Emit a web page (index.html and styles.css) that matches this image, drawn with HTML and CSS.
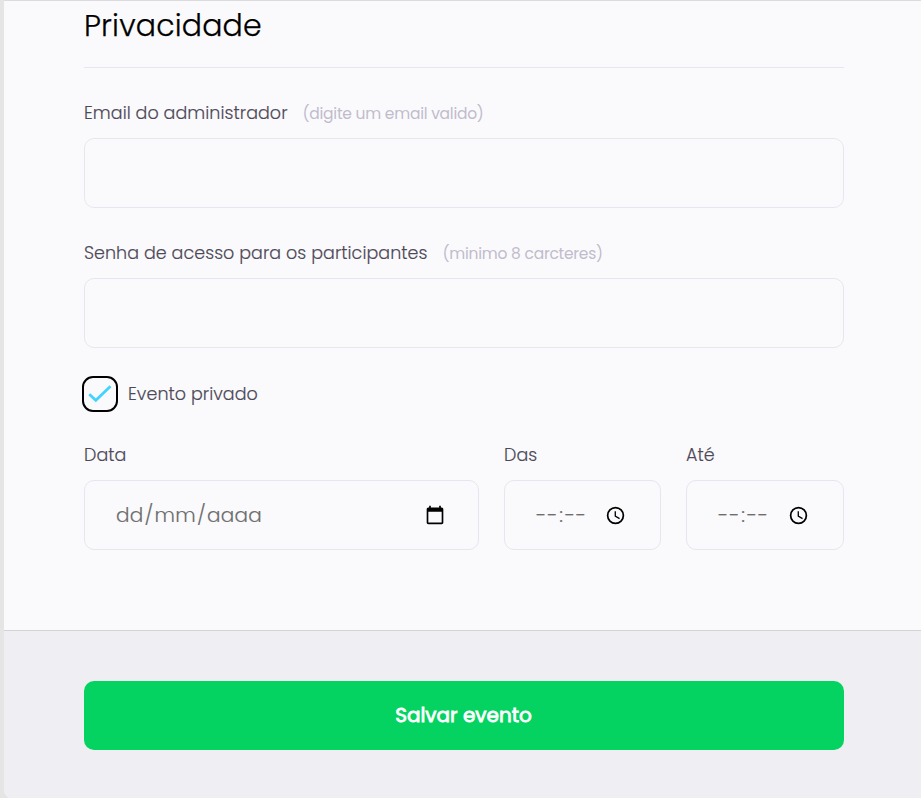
FILE: index.html
```html
<!DOCTYPE html>
<html lang="pt-BR">
<head>
<meta charset="utf-8">
<title>Privacidade</title>
<link rel="stylesheet" href="styles.css">
</head>
<body>
<form class="card">
  <section class="content">
    <h1>Privacidade</h1>
    <div class="field">
      <label for="email">Email do administrador<small>(digite um email valido)</small></label>
      <input id="email" type="email">
    </div>
    <div class="field">
      <label for="senha">Senha de acesso para os participantes<small>(minimo 8 carcteres)</small></label>
      <input id="senha" type="password">
    </div>
    <div class="check">
      <span class="box"><svg width="24" height="20" viewBox="0 0 24 20"><path d="M1.300 10.200 7.800 16.300 22.500 2.200" fill="none" stroke="#42d3ff" stroke-width="2.7"/></svg></span>
      <span>Evento privado</span>
    </div>
    <div class="row">
      <div class="field date">
        <label>Data</label>
        <div class="control"><span class="value"><span>dd</span>/<span>mm</span>/<span>aaaa</span></span>
          <svg width="20" height="20" viewBox="0 0 24 24"><path d="M20 3h-1V1h-2v2H7V1H5v2H4c-1.100 0-2 .9-2 2v16c0 1.100.9 2 2 2h16c1.100 0 2-.9 2-2V5c0-1.100-.9-2-2-2zm0 18H4V8h16v13z"/></svg>
        </div>
      </div>
      <div class="field time">
        <label>Das</label>
        <div class="control"><span class="value"><span>--</span>:<span>--</span></span>
          <svg width="21" height="21" viewBox="0 0 24 24"><path d="M12 2a10 10 0 1 0 0 20 10 10 0 0 0 0-20zm0 18a8 8 0 1 1 0-16 8 8 0 0 1 0 16zm.5-13H11v6l5.250 3.150.75-1.230-4.500-2.670z"/></svg>
        </div>
      </div>
      <div class="field time">
        <label>Até</label>
        <div class="control"><span class="value"><span>--</span>:<span>--</span></span>
          <svg width="21" height="21" viewBox="0 0 24 24"><path d="M12 2a10 10 0 1 0 0 20 10 10 0 0 0 0-20zm0 18a8 8 0 1 1 0-16 8 8 0 0 1 0 16zm.5-13H11v6l5.250 3.150.75-1.230-4.500-2.670z"/></svg>
        </div>
      </div>
    </div>
  </section>
  <footer><button type="button">Salvar evento</button></footer>
</form>
</body>
</html>
```
FILE: styles.css
```css
* { box-sizing: border-box; margin: 0; padding: 0; }
html { background: #e5e5e5; overflow: hidden; }
body {
  height: 798px;
  overflow: hidden;
  padding-left: 4px;
  font-family: Poppins, Inter, sans-serif;
  font-weight: 300;
  color: #4e4958;
}
.card {
  height: 799px;
  border-top: 1px solid #dcdcde;
  border-radius: 0 0 0 10px;
  background: #fafafc;
  overflow: hidden;
}
.content { height: 629px; padding: 0 77px 0 80px; }
h1 {
  height: 67px;
  padding-top: 1px;
  border-bottom: 1px solid #e6e6f0;
  font-size: 30px;
  line-height: 48px;
  font-weight: 300;
  letter-spacing: 0.17px;
  -webkit-text-stroke: 0.25px #000;
  color: #000;
}
.field { display: flex; flex-direction: column; }
.content > .field { height: 140px; padding-top: 33px; }
label, .check {
  font-size: 17.5px;
  letter-spacing: 0.05px;
  white-space: nowrap;
  -webkit-text-stroke: 0.15px #4e4958;
}
label { display: flex; align-items: center; height: 24px; margin-bottom: 13px; }
label small {
  margin-left: 15px;
  padding-top: 1px;
  font-size: 15.5px;
  font-weight: 400;
  letter-spacing: -0.25px;
  -webkit-text-stroke: 0;
  color: #c1bccc;
}
input, .control {
  width: 100%;
  height: 70px;
  border: 1px solid #e6e6f0;
  border-radius: 10px;
  background: #fafafc;
}
.check { display: flex; align-items: center; height: 36px; margin: 28px 0 0 -2px; }
.box {
  display: flex;
  align-items: center;
  justify-content: center;
  width: 36px;
  height: 36px;
  margin-right: 10px;
  border: 2px solid #000;
  border-radius: 11px;
}
.row { display: grid; grid-template-columns: 395px 157px 158px; gap: 25px; margin-top: 31px; }
.control { display: flex; align-items: center; justify-content: space-between; padding: 0 33px 0 30px; font-size: 20px; color: #6d6d6d; }
.control svg { fill: #000; }
.time .control { padding-right: 34px; }
.value { white-space: nowrap; letter-spacing: 0.25px; -webkit-text-stroke: 0.15px #6d6d6d; }
.time .value { letter-spacing: 0.75px; }
.value span { padding: 0 1px; }
footer { height: 169px; padding: 50px 77px 0 80px; border-top: 1px solid #d3d3d5; background: #efeef3; }
button {
  display: block;
  width: 100%;
  height: 69px;
  padding: 0 1px 1px 0;
  border: 0;
  border-radius: 10px;
  background: #04d361;
  color: #fff;
  font: 400 20px Poppins, Inter, sans-serif;
  -webkit-text-stroke: 0.8px #fff;
}
```
